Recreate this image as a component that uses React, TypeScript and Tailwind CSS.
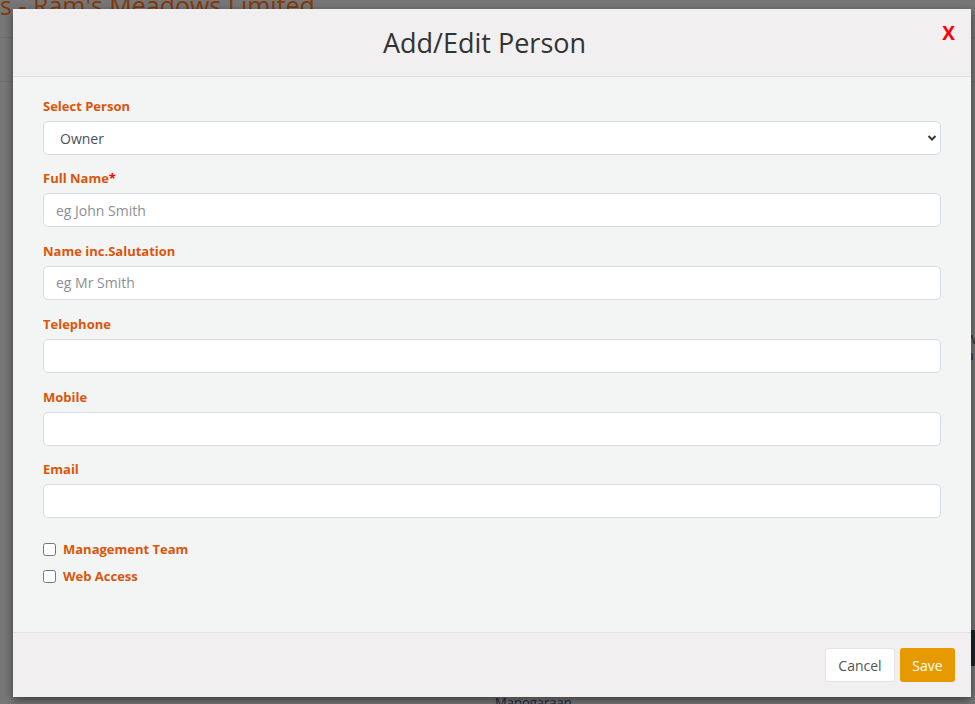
import React from 'react';

const fields = [
	{ label: 'Full Name', required: true, placeholder: 'eg John Smith' },
	{ label: 'Name inc.Salutation', placeholder: 'eg Mr Smith' },
	{ label: 'Telephone', placeholder: '' },
	{ label: 'Mobile', placeholder: '' },
	{ label: 'Email', placeholder: '' },
];

const labelCls = 'block text-[13px] leading-5 font-bold text-[#d9560b] mb-[5px]';
const inputCls =
	'block w-full h-[34px] rounded-[5px] border border-[#d3dbe6] bg-white px-3 text-[14px] text-[#495057] placeholder:text-[#8a8f94] outline-none';

function Backdrop() {
	return (
		<div className="absolute inset-0 bg-[#777777]">
			<div className="h-[38px] border-b border-[#6f6f6f] overflow-hidden">
				<p className="-mt-[11px] text-[25px] leading-[32px] text-[#83390a]">s - Ram's Meadows Limited</p>
			</div>
			<div className="h-[44px] border-b border-[#6f6f6f]" />
			<div className="flex justify-end">
				<div className="w-[8px] mt-[250px] text-[12px] leading-4 text-[#2b2b2b]">
					<p className="-ml-[1px]">W</p>
					<p>a</p>
				</div>
			</div>
			<div className="absolute right-0 top-[630px] h-[36px] w-[6px] bg-[#1b2527]" />
			<p className="absolute left-[495px] top-[693px] text-[13px] text-[#1e2640]">Manogaraan</p>
		</div>
	);
}

function Field({ label, required, placeholder }: { label: string; required?: boolean; placeholder: string }) {
	return (
		<div className="mb-[13.8px]">
			<label className={labelCls}>
				{label}
				{required && <span className="text-[#ff0000]">*</span>}
			</label>
			<input className={inputCls} placeholder={placeholder} />
		</div>
	);
}

export default function App() {
	return (
		<div className="relative h-[704px] w-[975px] overflow-hidden font-['Open_Sans',sans-serif]">
			<Backdrop />
			<div className="absolute left-[13px] top-[9px] w-[958px] h-[688px] flex flex-col bg-[#f3f4f4] shadow-[0_3px_9px_rgba(0,0,0,0.5)]">
				<div className="relative h-[68px] shrink-0 flex items-center justify-center pr-[15px] bg-[#f1eff0] border-b border-[#e2dfe0]">
					<h4 className="text-[27px] text-[#333333] mt-[1px]">Add/Edit Person</h4>
					<span className="absolute right-[16px] top-[10px] text-[19px] font-bold text-[#ff0000]">X</span>
				</div>
				<div className="flex-1 px-[30px] pt-[19px]">
					<div className="mb-[13.2px]">
						<label className={labelCls}>Select Person</label>
						<div className="relative">
							<select className={inputCls + ' appearance-none pl-[16px]'} defaultValue="Owner">
								<option>Owner</option>
							</select>
							<svg
								className="absolute right-[4px] top-[13px] pointer-events-none"
								width="10"
								height="8"
								viewBox="0 0 10 8"
							>
								<path d="M1.5 2 L5 5.5 L8.5 2" stroke="#343a40" strokeWidth="2" fill="none" />
							</svg>
						</div>
					</div>
					{fields.map((f, i) => (
						<Field key={i} {...f} />
					))}
					<div className="pt-[9px] flex flex-col gap-[11px]">
						<label className="flex items-center gap-[7px] text-[13px] leading-4 font-bold text-[#d9560b]">
							<input type="checkbox" className="h-[13px] w-[13px]" />
							Management Team
						</label>
						<label className="flex items-center gap-[7px] text-[13px] leading-4 font-bold text-[#d9560b]">
							<input type="checkbox" className="h-[13px] w-[13px]" />
							Web Access
						</label>
					</div>
				</div>
				<div className="h-[65px] shrink-0 flex items-center justify-end gap-[5px] pr-[16px] bg-[#f1eff0] border-t border-[#e2dfe0]">
					<button className="h-[34px] w-[70px] rounded-[3px] border border-[#e4e4e4] bg-white text-[14px] text-[#555555]">
						Cancel
					</button>
					<button className="h-[34px] w-[55px] rounded-[3px] bg-[#e69a00] text-[14px] text-white">Save</button>
				</div>
			</div>
		</div>
	);
}
